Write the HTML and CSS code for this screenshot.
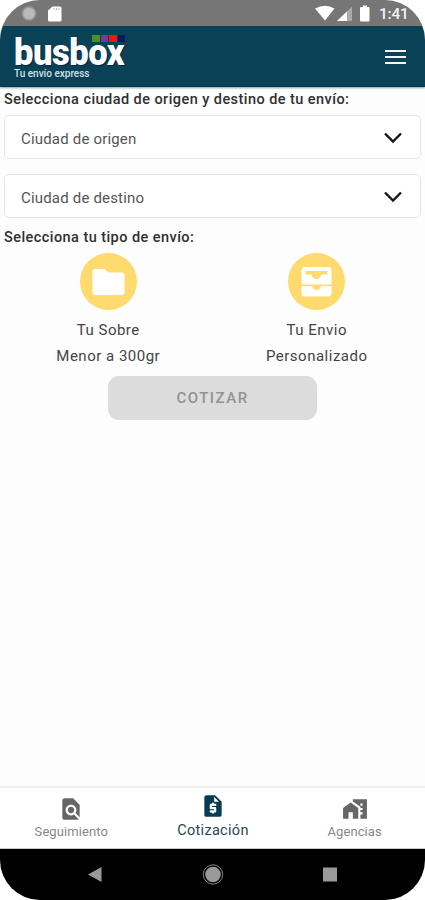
FILE: index.html
```html
<!DOCTYPE html>
<html lang="es">
<head>
<meta charset="utf-8">
<title>Busbox</title>
<link rel="stylesheet" href="styles.css">
</head>
<body>
<div class="phone">
  <div class="status">
    <svg class="status-left" viewBox="0 0 50 26"><circle cx="11" cy="13.500" r="6.500" fill="#b9b9b9" stroke="#989898" stroke-width="1.500"/><path d="M34.500 6.500H42a1.500 1.500 0 0 1 1.500 1.500v12a1.500 1.500 0 0 1-1.500 1.500H31.500A1.500 1.500 0 0 1 30 20v-9.500z" fill="#fff"/><path d="M36 8v2m2.500-2v2m2.500-2v2" stroke="#bbb"/></svg>
    <svg class="status-right" viewBox="0 0 60 26"><path d="M0 8.500Q10 3 19.500 8.500L10 20.500z" fill="#fff"/><path d="M37 6.500v14.500H22z" fill="#aaa"/><path d="M32 11.500v9.500H22z" fill="#fff"/><path d="M48 5.500h4v1.500h1.500q1 0 1 1V20q0 1.500-1 1.500h-7.500q-1 0-1-1.500V8q0-1 1-1H48z" fill="#fff"/></svg>
    <span class="clock">1:41</span>
  </div>
  <header class="bar">
    <div class="logo">
      <span class="squares"><i class="green"></i><i class="purple"></i><i class="red"></i><i class="navy"></i></span>
      <span class="brand">busbox</span>
      <span class="tagline">Tu envío express</span>
    </div>
    <div class="burger"><i></i><i></i><i></i></div>
  </header>
  <main>
    <h2 class="h-city">Selecciona ciudad de origen y destino de tu envío:</h2>
    <div class="select"><span class="origin">Ciudad de origen</span><svg viewBox="0 0 18 12"><path d="M1 1.500l8 8 8-8"/></svg></div>
    <div class="select"><span class="dest">Ciudad de destino</span><svg viewBox="0 0 18 12"><path d="M1 1.500l8 8 8-8"/></svg></div>
    <h2 class="h-type">Selecciona tu tipo de envío:</h2>
    <div class="types">
      <div class="type">
        <svg viewBox="0 0 57 57"><circle cx="28.500" cy="28.500" r="28.500" fill="#ffda6e"/><path d="M15 16h9.500l4 3.500H42q2.500 0 2.500 2.500v17.500q0 2.500-2.500 2.500H15q-2.500 0-2.500-2.500v-21Q12.500 16 15 16z" fill="#fff"/></svg>
        <span>Tu Sobre</span><span>Menor a 300gr</span>
      </div>
      <div class="type">
        <svg viewBox="0 0 57 57"><circle cx="28.500" cy="28.500" r="28.500" fill="#ffda6e"/><path fill="#fff" fill-rule="evenodd" d="M17 14h23q3.500 0 3.500 3.500V31.500h-30V17.500Q13.500 14 17 14zM17.500 18v3.500h6q1.500 4.500 5 4.500t5-4.500h6V18z"/><path fill="#fff" d="M13.500 33h10.500q1 4 4.500 4t4.500-4h10.500V40q0 3.500-3.500 3.500H17q-3.500 0-3.500-3.500z"/></svg>
        <span>Tu Envio</span><span>Personalizado</span>
      </div>
    </div>
    <button class="quote" disabled>COTIZAR</button>
  </main>
  <nav class="tabs">
    <a class="tab"><svg viewBox="0 0 24 24"><path d="M20 19.590V8l-6-6H6c-1.100 0-1.990.9-1.990 2L4 20c0 1.100.89 2 1.990 2H18c.45 0 .85-.15 1.190-.4l-4.430-4.430c-.8.520-1.740.83-2.760.83-2.760 0-5-2.240-5-5s2.240-5 5-5 5 2.240 5 5c0 1.020-.31 1.960-.83 2.750L20 19.590zM9 13c0 1.660 1.340 3 3 3s3-1.340 3-3-1.340-3-3-3-3 1.340-3 3z"/></svg><span>Seguimiento</span></a>
    <a class="tab active"><svg viewBox="0 0 24 24"><path fill-rule="evenodd" d="M14 2H6c-1.100 0-2 .9-2 2v16c0 1.100.9 2 2 2h12c1.100 0 2-.9 2-2V8zM15 12h-4v1h3c.55 0 1 .45 1 1v3c0 .55-.45 1-1 1h-1v1h-2v-1H9v-2h4v-1h-3c-.55 0-1-.45-1-1v-3c0-.55.45-1 1-1h1V9h2v1h2zM13 8V3.500L17.500 8z"/></svg><span>Cotización</span></a>
    <a class="tab"><svg viewBox="0 0 24 24"><path d="M1 11v10h5v-6h4v6h5V11L8 6z"/><path fill-rule="evenodd" d="M10 3v1.970l7 5V11h2v2h-2v2h2v2h-2v4h6V3zm9 6h-2V7h2z"/></svg><span>Agencias</span></a>
  </nav>
  <div class="system">
    <svg viewBox="0 0 24 24"><path d="M5 11.500L18.500 4v15z"/></svg>
    <svg viewBox="0 0 24 24"><circle cx="12" cy="11.500" r="7.800"/><circle cx="12" cy="11.500" r="9.700" fill="none" stroke="#888"/></svg>
    <svg viewBox="0 0 24 24"><path d="M5 4.500h14v14H5z"/></svg>
  </div>
</div>
</body>
</html>
```
FILE: styles.css
```css
* { box-sizing: border-box; }
body { margin: 0; background: #fff; font-family: Roboto, sans-serif; color: #333; }
.phone { width: 425px; height: 900px; display: flex; flex-direction: column; overflow: hidden; border-radius: 40px; background: #fdfdfd; }
.status { height: 26px; flex: none; display: flex; align-items: center; background: #767676; }
.status svg { height: 26px; flex: none; overflow: visible; }
.status-left { width: 50px; margin-left: 18px; }
.status-right { width: 60px; margin-left: 247px; }
.clock { margin-left: 4px; margin-top: 2px; font-size: 15.500px; font-weight: 500; letter-spacing: -.2px; color: #f3f3f3; }
.bar { height: 61px; flex: none; display: flex; justify-content: space-between; background: #094157; border-bottom: 1px solid #06364b; box-shadow: 0 1px 2px #999; }
.logo { position: relative; display: flex; flex-direction: column; padding: 12px 0 0 14px; color: #fff; }
.brand { position: relative; width: 112px; height: 30px; font: 900 36px/30px Roboto, sans-serif; letter-spacing: -.5px; text-shadow: 1px 1px #082048; transform: scaleX(.96); transform-origin: left; }
.tagline { font-size: 10px; line-height: 12px; font-weight: 500; color: #d5e0e6; white-space: nowrap; }
.squares { position: absolute; left: 92px; top: 9px; display: flex; gap: 1px; }
.squares i { width: 7.500px; height: 7px; }
.green { background: #3f951d; }
.purple { background: #743a9a; }
.red { background: #fb1018; }
.navy { background: #0b195f; }
.burger { display: flex; flex-direction: column; gap: 4px; padding: 24px 19px 0 0; }
.burger i { width: 21px; height: 2px; background: #f2f4f6; }
main { flex: 1; padding: 0 4px; display: flex; flex-direction: column; }
h2 { margin: 0; font-size: 14.500px; line-height: 20px; font-weight: 500; color: #303030; white-space: nowrap; }
.h-city { margin: 3px 0 5px; letter-spacing: .44px; }
.h-type { margin-top: -5px; letter-spacing: .44px; }
.select { height: 44px; margin-bottom: 15px; padding: 0 18px 0 16px; display: flex; align-items: center; justify-content: space-between; border: 1px solid #e5e5e5; border-radius: 5px; background: #fff; font-size: 15px; letter-spacing: .18px; color: #555; }
.select span { padding-top: 3px; }
.select svg { width: 18px; height: 12px; margin-top: 1px; fill: none; stroke: #161616; stroke-width: 2.400; }
.types { display: grid; grid-template-columns: 1fr 1fr; margin-top: 5px; }
.type { display: flex; flex-direction: column; align-items: center; font-size: 15px; line-height: 26px; letter-spacing: .5px; color: #444; }
.type svg { width: 57px; height: 57px; margin-bottom: 7px; }
.quote { width: 209px; height: 44px; margin: 7px auto 0; padding: 0; border: 0; border-radius: 11px; background: #dcdcdc; color: #929292; font: 500 15px Roboto, sans-serif; letter-spacing: 1.500px; }
.tabs { height: 63px; flex: none; display: grid; grid-template-columns: repeat(3, 1fr); background: #fff; border-top: 2px solid #eee; border-bottom: 1px solid #ccc; }
.tab { display: flex; flex-direction: column; align-items: center; padding: 8px 0 0 1px; font-size: 13px; letter-spacing: .1px; color: #888; }
.tab svg { width: 26px; height: 26px; fill: #666; }
.tab span { line-height: 19px; }
.tab.active { padding-top: 5px; font-size: 14.500px; letter-spacing: .3px; color: #294653; }
.tab.active svg { fill: #073b54; }
.tab.active span { line-height: 23px; }
.system { height: 51px; flex: none; display: flex; justify-content: space-between; align-items: center; padding: 0 83px; background: #000; }
.system svg { width: 24px; height: 24px; fill: #999; }
```
